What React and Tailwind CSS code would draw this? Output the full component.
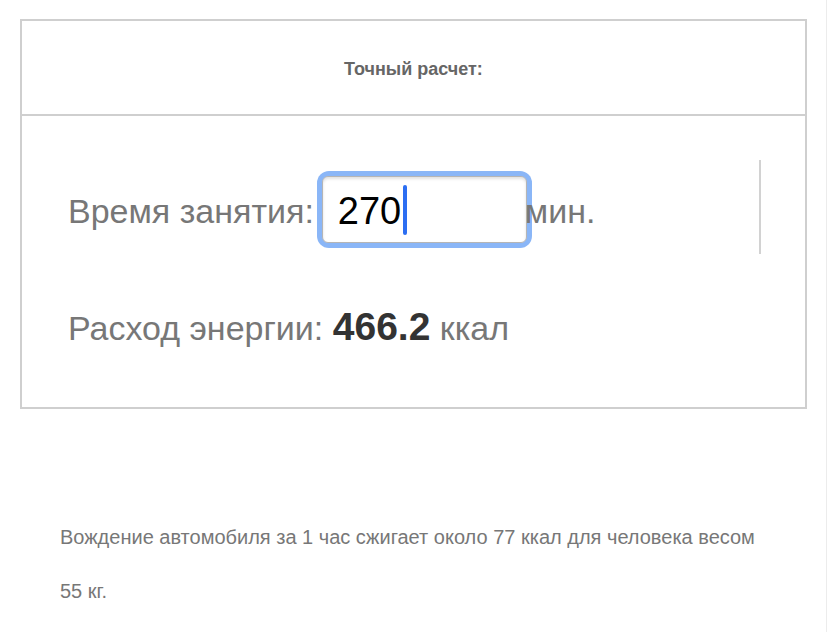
export default function App() {
  return (
    <div className="relative min-h-[632px] w-[829px] bg-white font-['Liberation_Sans',Arial,sans-serif]">
      <div className="absolute right-[2px] top-0 h-[632px] w-px bg-[#ececec]" />
      <div className="pl-[20px] pt-[19px]">
        <div className="w-[787px] border-2 border-[#cfcfcf]">
          <div className="flex h-[95px] items-center justify-center border-b-2 border-[#cfcfcf] pt-[4px]">
            <span className="text-[18px] font-bold text-[#666]">Точный расчет:</span>
          </div>
          <div className="h-[291px] pl-[46px] pt-[43px]">
            <div className="flex h-[95px] items-center">
              <div className="mt-[6px] flex items-center">
                <span className="mt-[4px] text-[34px] text-[#777]">Время занятия:</span>
                <div className="ml-[3px] rounded-[12px] bg-[#8ab6f7] p-[5px]">
                  <div className="flex h-[67px] w-[205px] items-center rounded-[6px] border border-[#b5b5b5] bg-white pl-[15px] shadow-[inset_0_2px_3px_rgba(0,0,0,0.12)]">
                    <span className="mt-[2px] text-[38px] leading-none text-black">270</span>
                    <span className="ml-[2px] h-[50px] w-[4px] rounded-full bg-[#2c6ef2]" />
                  </div>
                </div>
                <span className="ml-[-7px] mt-[4px] text-[34px] text-[#777]">мин.</span>
              </div>
              <div className="ml-auto mr-[44px] h-[94px] w-[2px] bg-[#d2d2d2]" />
            </div>
            <div className="mt-[44px] flex items-baseline">
              <span className="text-[34px] text-[#777]">Расход энергии:&nbsp;</span>
              <span className="text-[39px] font-bold text-[#333]">466.2</span>
              <span className="text-[34px] text-[#777]">&nbsp;ккал</span>
            </div>
          </div>
        </div>
      </div>
      <div className="pl-[60px] pt-[101px] text-[20px] leading-[54px] text-[#777]">
        <p>Вождение автомобиля за 1 час сжигает около 77 ккал для человека весом</p>
        <p>55 кг.</p>
      </div>
    </div>
  );
}
